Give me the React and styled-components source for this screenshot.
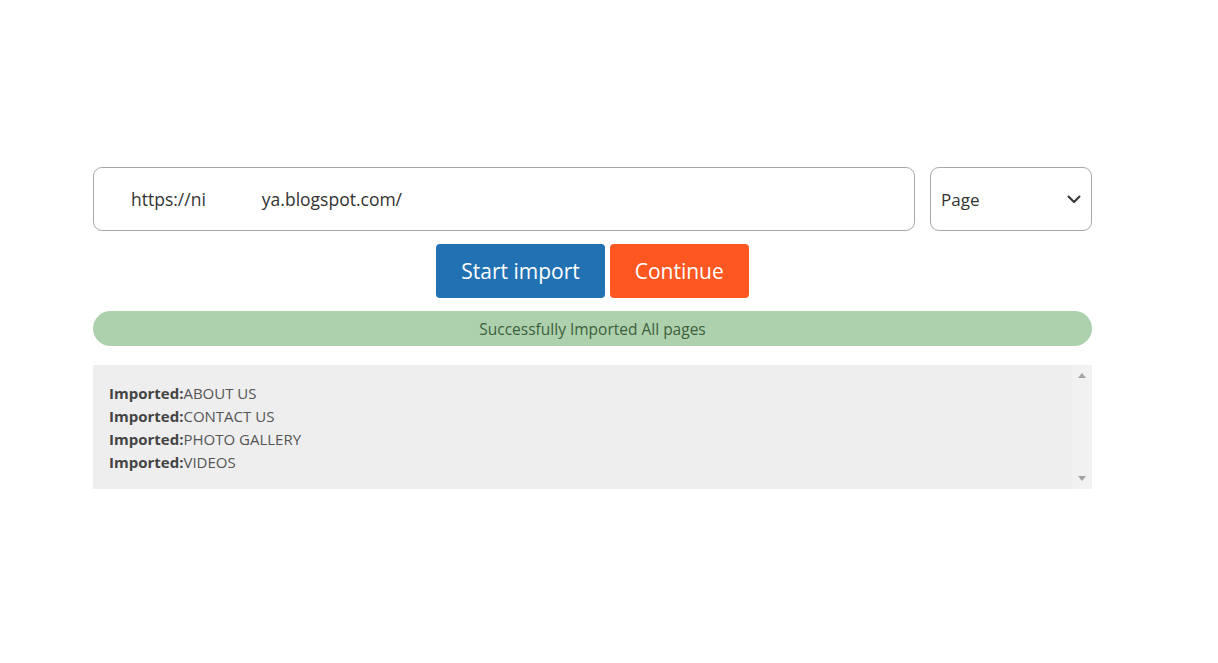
import styled, { createGlobalStyle } from "styled-components";

const GlobalStyle = createGlobalStyle`
  body {
    margin: 0;
    background: #ffffff;
    font-family: "Open Sans", "Noto Sans", sans-serif;
  }
`;

const App = () => {
  const pages = ["ABOUT US", "CONTACT US", "PHOTO GALLERY", "VIDEOS"];

  return (
    <>
      <GlobalStyle />
      <Page>
        <ImportPanel>
          <InputRow>
            <UrlField>
              https://ni<Redacted />ya.blogspot.com/
            </UrlField>
            <TypeSelect>
              <span>Page</span>
              <svg width="14" height="9" viewBox="0 0 14 9" fill="none">
                <path d="M1.5 1.5 L7 7 L12.5 1.5" stroke="#333" strokeWidth="2" strokeLinecap="round" strokeLinejoin="round" />
              </svg>
            </TypeSelect>
          </InputRow>
          <ButtonRow>
            <ActionButton $bg="#2271b3">Start import</ActionButton>
            <ActionButton $bg="#ff5722">Continue</ActionButton>
          </ButtonRow>
          <StatusBar>Successfully Imported All pages</StatusBar>
          <LogBox>
            <LogText>
              {pages.map((p) => (
                <LogLine key={p}>
                  <b>Imported:</b>
                  {p}
                </LogLine>
              ))}
            </LogText>
            <ScrollTrack>
              <Arrow $up />
              <Arrow />
            </ScrollTrack>
          </LogBox>
        </ImportPanel>
      </Page>
    </>
  );
};

const Page = styled.div`
  padding: 167px 0 0 93px;
`;

const ImportPanel = styled.div`
  width: 999px;
  display: flex;
  flex-direction: column;
`;

const InputRow = styled.div`
  display: flex;
  gap: 15px;
`;

const UrlField = styled.div`
  flex: 1;
  height: 64px;
  box-sizing: border-box;
  border: 1px solid #a9a9a9;
  border-radius: 9px;
  display: flex;
  align-items: center;
  padding-left: 37px;
  font-size: 17.5px;
  color: #333;
  white-space: pre;
`;

const Redacted = styled.span`
  display: inline-block;
  width: 56px;
`;

const TypeSelect = styled.div`
  width: 162px;
  height: 64px;
  box-sizing: border-box;
  border: 1px solid #a9a9a9;
  border-radius: 9px;
  display: flex;
  align-items: center;
  justify-content: space-between;
  padding: 0 10px 0 10px;
  font-size: 17px;
  color: #333;
`;

const ButtonRow = styled.div`
  display: flex;
  justify-content: center;
  gap: 5px;
  margin-top: 13px;
`;

const ActionButton = styled.button`
  height: 54px;
  padding: 0 25px;
  border: none;
  border-radius: 4px;
  background: ${(p) => p.$bg};
  color: #fff;
  font-family: "Open Sans", "Noto Sans", sans-serif;
  font-size: 21px;
  cursor: pointer;
`;

const StatusBar = styled.div`
  margin-top: 13px;
  height: 35px;
  border-radius: 18px;
  background: #acd1ac;
  color: #3d5f3d;
  font-size: 15.5px;
  display: flex;
  align-items: center;
  justify-content: center;
`;

const LogBox = styled.div`
  margin-top: 19px;
  height: 124px;
  display: flex;
  background: #eeeeee;
`;

const LogText = styled.div`
  flex: 1;
  padding: 17px 16px 0;
  font-size: 15px;
  line-height: 23px;
  color: #555;
`;

const LogLine = styled.div`
  b {
    font-weight: 700;
    color: #444;
  }
`;

const ScrollTrack = styled.div`
  width: 20px;
  background: #f1f1f1;
  display: flex;
  flex-direction: column;
  justify-content: space-between;
  align-items: center;
  padding: 8px 0;
`;

const Arrow = styled.div`
  width: 0;
  height: 0;
  border-left: 4px solid transparent;
  border-right: 4px solid transparent;
  ${(p) =>
    p.$up
      ? "border-bottom: 5px solid #a3a3a3;"
      : "border-top: 5px solid #a3a3a3;"}
`;

export default App;
